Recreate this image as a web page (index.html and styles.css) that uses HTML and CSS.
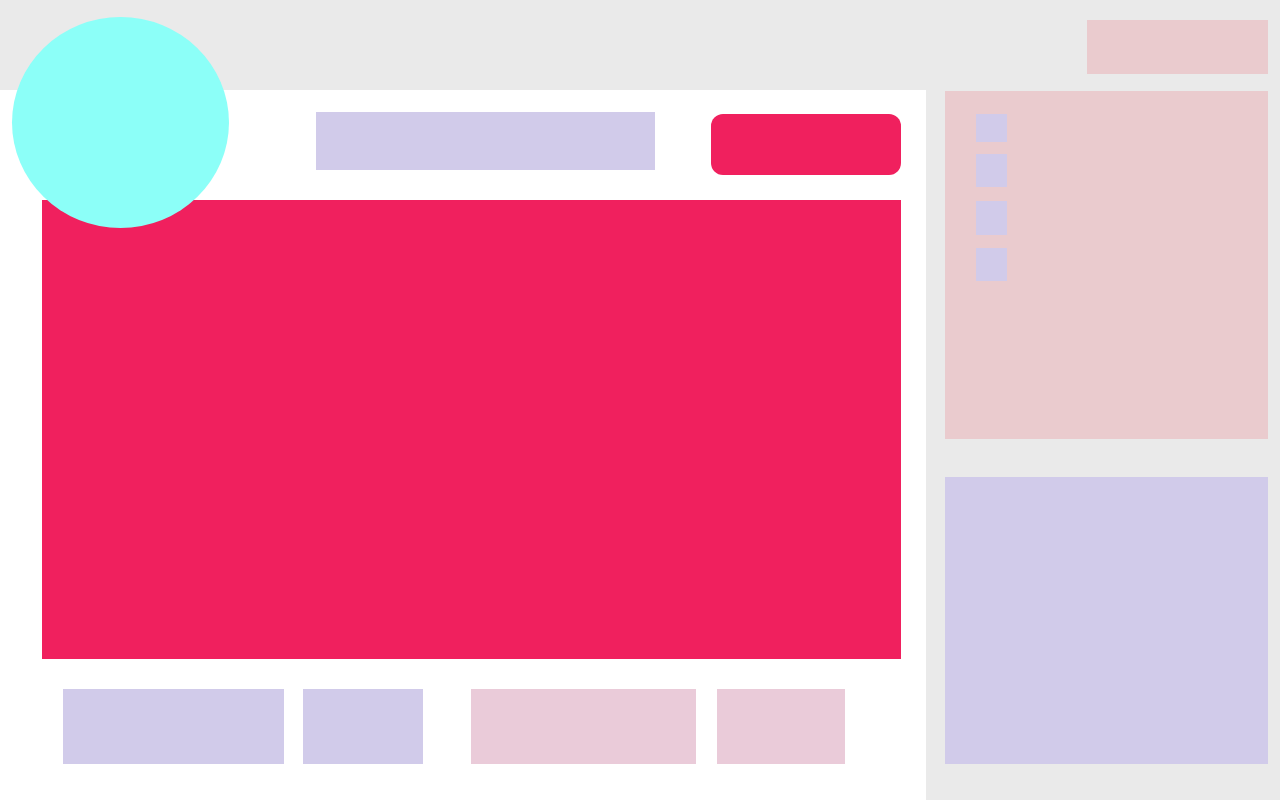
FILE: index.html
```html
<!DOCTYPE html>
<html lang="en">
<head>
    <meta charset="UTF-8">
    <meta name="viewport" content="width=device-width, initial-scale=1.0">
    <title>Layout</title>
    <link rel="stylesheet" href="styles.css">
</head>
<body>
    <div class="page">
        <header class="topbar">
            <div class="logo"></div>
            <div class="top-action"></div>
        </header>

        <main class="main">
            <div class="toolbar">
                <div class="search"></div>
                <div class="cta"></div>
            </div>
            <div class="hero"></div>
            <div class="tags">
                <div class="tag tag-lav tag-wide"></div>
                <div class="tag tag-lav tag-narrow"></div>
                <div class="tag tag-pink tag-wide2 tag-gap"></div>
                <div class="tag tag-pink tag-narrow2"></div>
            </div>
        </main>

        <aside class="sidebar">
            <div class="menu">
                <div class="menu-item h28"></div>
                <div class="menu-item h33"></div>
                <div class="menu-item h34 push2"></div>
                <div class="menu-item h33 push1"></div>
            </div>
            <div class="widget"></div>
        </aside>
    </div>
</body>
</html>
```

FILE: styles.css
```css
html, body {
    margin: 0;
    padding: 0;
    background-color: #ffffff;
    font-family: "Liberation Sans", Arial, sans-serif;
}
.page {
    position: relative;
    display: grid;
    grid-template-columns: 926px 1fr;
    grid-template-rows: 90px 710px;
    width: 1280px;
    height: 800px;
    overflow: hidden;
}
.topbar {
    grid-column: 1 / 3;
    display: flex;
    justify-content: flex-end;
    align-items: flex-start;
    padding: 20px 12px 0 0;
    box-sizing: border-box;
    background-color: #eaeaea;
}
.logo {
    position: absolute;
    left: 12px;
    top: 17px;
    width: 217px;
    height: 211px;
    border-radius: 50%;
    background-color: #8cfff8;
    z-index: 2;
}
.top-action {
    width: 181px;
    height: 54px;
    background-color: #eacbce;
}
.main {
    background-color: #ffffff;
    padding: 22px 25px 0 42px;
    box-sizing: border-box;
}
.toolbar {
    display: flex;
    align-items: flex-start;
    gap: 56px;
    padding-left: 274px;
    height: 88px;
}
.search {
    width: 339px;
    height: 58px;
    background-color: #d1cbea;
}
.cta {
    width: 190px;
    height: 61px;
    margin-top: 2px;
    border-radius: 12px;
    background-color: #f0205e;
}
.hero {
    width: 859px;
    height: 459px;
    background-color: #f0205e;
}
.tags {
    display: flex;
    gap: 19px;
    margin-top: 30px;
    padding-left: 21px;
}
.tag {
    height: 75px;
}
.tag-lav {
    background-color: #d1cbea;
}
.tag-pink {
    background-color: #eacbd9;
}
.tag-wide {
    width: 221px;
}
.tag-narrow {
    width: 120px;
}
.tag-wide2 {
    width: 225px;
}
.tag-narrow2 {
    width: 128px;
    margin-left: 2px;
}
.tag-gap {
    margin-left: 29px;
}
.sidebar {
    background-color: #eaeaea;
    padding: 1px 12px 0 19px;
    box-sizing: border-box;
}
.menu {
    display: flex;
    flex-direction: column;
    gap: 12px;
    height: 348px;
    padding: 23px 0 0 31px;
    box-sizing: border-box;
    background-color: #eacbce;
}
.menu-item {
    width: 31px;
    background-color: #d1cbea;
}
.push2 { margin-top: 2px; }
.push1 { margin-top: 1px; }
.h28 { height: 28px; }
.h33 { height: 33px; }
.h34 { height: 34px; }
.widget {
    margin-top: 38px;
    height: 287px;
    background-color: #d1cbea;
}
```
